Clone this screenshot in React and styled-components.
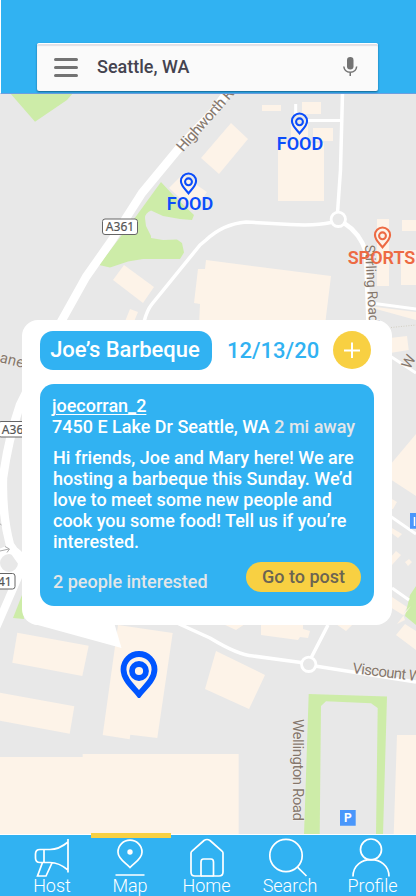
import React from "react";
import styled, { createGlobalStyle } from "styled-components";

const BLUE = "#31b2f2";
const YELLOW = "#f8d042";

const GlobalStyle = createGlobalStyle`
  *, *::before, *::after { box-sizing: border-box; }
  html, body { margin: 0; padding: 0; background: #fff; }
  body { font-family: Roboto, "Liberation Sans", sans-serif; }
`;

const Screen = styled.div`
  display: flex;
  flex-direction: column;
  width: 100%;
  height: 896px;
  overflow: hidden;
`;

const Header = styled.header`
  flex: none;
  height: 94px;
  padding: 43px 38px 0 36px;
  background: ${BLUE};
  border-left: 1px solid #fff;
  border-bottom: 1px solid #6c9fe0;
`;

const SearchBar = styled.div`
  display: flex;
  align-items: center;
  width: 341px;
  height: 48px;
  padding: 0 18px 0 17px;
  border-radius: 2px;
  background: #fafafa;
  border-top: 1px solid #fff;
  box-shadow: 0 1px 2px rgba(0, 40, 70, 0.6), inset 0 2px 1px #e2e0e6;
  svg { display: block; flex: none; margin-bottom: 1px; }
`;

const SearchText = styled.span`
  flex: 1;
  margin: 0 0 2px 19px;
  color: #44434f;
  font-size: 18px;
  font-weight: 500;
  line-height: 22px;
`;

const MapArea = styled.main`
  position: relative;
  flex: none;
  height: 740px;
  background: #e8e8e8;
  overflow: hidden;
`;

const MapCanvas = styled.svg`
  display: block;
  width: 416px;
  height: 740px;
`;

const Marker = styled.div`
  position: absolute;
  left: ${(p) => p.$x}px;
  top: ${(p) => p.$y}px;
  width: 80px;
  margin-left: -40px;
  display: flex;
  flex-direction: column;
  align-items: center;
  color: ${(p) => p.$color};
  svg { display: block; }
`;

const MarkerLabel = styled.span`
  margin: -2px 0 0 ${(p) => p.$shift || 0}px;
  font-size: 18px;
  font-weight: 600;
  line-height: 21px;
  white-space: nowrap;
`;

const Popup = styled.section`
  position: absolute;
  left: 22px;
  top: 226px;
  width: 370px;
  height: 305px;
  padding: 11px 18px 19px;
  border-radius: 16px;
  background: #fff;
`;

const PopupTail = styled.svg`
  position: absolute;
  left: 8px;
  top: 300px;
  width: 95px;
  height: 30px;
`;

const PopupHead = styled.div`
  display: flex;
  align-items: center;
  height: 39px;
`;

const EventTitle = styled.h1`
  margin: 0;
  width: 172px;
  height: 39px;
  padding-right: 2px;
  border-radius: 13px;
  background: ${BLUE};
  color: #fff;
  font-size: 22px;
  font-weight: 500;
  line-height: 38px;
  text-align: center;
  white-space: nowrap;
`;

const EventDate = styled.time`
  width: 93px;
  margin-left: 15px;
  color: ${BLUE};
  font-size: 22px;
  font-weight: 500;
  white-space: nowrap;
`;

const AddButton = styled.button`
  display: grid;
  place-items: center;
  width: 38px;
  height: 38px;
  margin: 0 0 1px 13px;
  padding: 0;
  border: 0;
  border-radius: 50%;
  background: ${YELLOW};
`;

const Post = styled.article`
  display: flex;
  flex-direction: column;
  width: 334px;
  height: 222px;
  margin-top: 14px;
  padding: 11px 13px 14px 12px;
  border-radius: 14px;
  background: ${BLUE};
  color: #fff;
  font-size: 18px;
  font-weight: 500;
  line-height: 21px;
  white-space: nowrap;
`;

const Author = styled.a`
  width: max-content;
  text-decoration: underline;
  text-decoration-thickness: 1px;
  text-underline-offset: 2px;
`;

const Muted = styled.span`
  color: #e3e6e8;
`;

const Message = styled.p`
  margin: 10px 0 0 1px;
`;

const PostFoot = styled.div`
  display: flex;
  justify-content: space-between;
  align-items: center;
  height: 30px;
  margin: auto 0 0 1px;
`;

const Interested = styled.span`
  margin-top: 9px;
  color: #e3e6e8;
`;

const PostButton = styled.button`
  width: 115px;
  height: 30px;
  padding: 0;
  border: 0;
  border-radius: 15px;
  background: ${YELLOW};
  color: #6b6452;
  font: 500 18px/30px Roboto, sans-serif;
`;

const NavBar = styled.nav`
  display: grid;
  grid-template-columns: 91px 78px 75px 92px 73px;
  flex: none;
  height: 62px;
  border-top: 1px solid #fff;
  background: ${BLUE};
`;

const NavItem = styled.a`
  position: relative;
  display: flex;
  flex-direction: column;
  align-items: center;
  margin-left: ${(p) => p.$shift || 0}px;
  padding-top: 4px;
  color: #fff;
  font-size: 18px;
  font-weight: 300;
  line-height: 18px;
  svg {
    display: block;
    overflow: visible;
    margin: 0 ${(p) => p.$iconLeft || 0}px -1px 0;
  }
`;

const ActiveBar = styled.span`
  position: absolute;
  left: 0;
  top: -2px;
  width: 80px;
  height: 5px;
  background: ${YELLOW};
`;

const Pin = ({ width, height, stroke }) => (
  <svg width={width} height={height} viewBox="0 0 37 47" fill="none" stroke="currentColor" strokeWidth={stroke}>
    <path d="M18.5 43.5C13 36.5 3 28.5 3 18.5a15.5 15.5 0 0 1 31 0C34 28.5 24 36.5 18.5 43.5Z" />
    <circle cx="18.5" cy="20" r="7" />
  </svg>
);

const RoadLabel = ({ x, y, angle, length, size = 15, children }) => (
  <text
    transform={`translate(${x} ${y}) rotate(${angle})`}
    fontSize={size}
    textLength={length}
    fill="#85776c"
    stroke="#f3f1ef"
    strokeWidth="1"
    paintOrder="stroke"
  >
    {children}
  </text>
);

const RoadBadge = ({ x, y, width, children }) => (
  <g>
    <rect x={x} y={y} width={width} height="15.5" rx="2.5" fill="#fff" stroke="#666" />
    <text x={x + width / 2} y={y + 12.2} fontSize="12" textAnchor="middle" fill="#555" stroke="#555" strokeWidth="0.2" fontFamily="Noto Sans, sans-serif">
      {children}
    </text>
  </g>
);

const StreetMap = () => (
  <MapCanvas viewBox="0 94 416 740">
    <g fill="#cdeca8">
      <path d="M10 93H73L67 100L35 121.700Z" />
      <path d="M161 182L173 195L194 215L192 220L180 219L163 216L151 210.500Q145 213 145 218L146 226L151 236V238L163 240L177 239.500L182 243L184 252.500L180 259L143 259L128 261.500L110 267.500L99 265L137 215Z" />
      <path d="M13 618L22 595L24 619Z" />
      <path d="M416 586L410 595L405 616L416 625Z" />
    </g>
    <g fill="#fdf3e8">
      <path d="M113 280L124 265L154 287L143 303Z" />
      <path d="M130 309L138 312L133 324H124Z" />
      <path d="M206 260L331 276L325 325H199L200 304L194 303L198 269H205Z" />
      <path d="M169 188L182 175L207 192L194 211Z" />
      <path d="M231 123L248 139L219 174L201 158Z" />
      <path d="M262 105H281V111H262ZM302 102H321V114H302ZM313 128H333V141H313ZM291 124H308V143H291ZM278 143H324V201H278Z" />
      <path d="M377 219H389V286H377ZM402 220H416V231H402ZM401 250H416V285H401Z" />
      <path d="M368 306L416 312V320L376 309Z" />
      <path d="M390 338L407 336L408.700 350L390 353Z" />
      <path d="M416 434L390 465V479L416 496Z" />
      <path d="M392 499L397 502L393 509H390ZM392 528L402 534L398 538L390 532ZM390 558L396 551L401 555L392 565ZM405 562L409 559L412 562L408 566ZM392 597L407 607L403 615L390 607Z" />
      <path d="M396 635L405 624L416 631V650ZM397 624L405 620L403 614L411 606Z" />
      <path d="M223 624H245L236 630ZM261 624H303V629L310 631L308 638L300 637L298 640L261 635ZM336 624H353L346 631Z" />
      <path d="M216 651L265 675L249 709L205 689Z" />
      <path d="M17.300 632.700L88.700 645.700L82.300 676L12.300 662.700Z" />
      <path d="M0 692.700L74.300 706.300L69.700 733.700L0 720.700Z" />
      <path d="M118 625L172.700 633L157.300 738L130.300 734.700L129.700 739.300L102.700 735Z" />
      <path d="M0 757H82.700V754H238.700V835H0Z" />
      <path d="M397 735H416V835H393.700Z" />
    </g>
    <path
      fill="#cdeca8"
      fillRule="evenodd"
      d="M308.700 694L387 696.500L383 835H304ZM321 706L326 701.300L371 703.300L377.700 708L376 835H319.700Z"
    />
    <g fill="none" stroke="#fff" strokeLinejoin="round">
      <path strokeWidth="8.500" d="M232 86L213 112L180 147L142 193L112 240L86 277L62 320L20 405Q8 440 3 478Q2 515 10 545L22 562" />
      <circle strokeWidth="8" cx="9" cy="563" r="13" />
      <path strokeWidth="8" d="M22 568L-4 628" />
      <path strokeWidth="3.500" d="M342.500 93L340.500 170L337.500 213M331 222.500Q316 226 290 224.500L246 222Q223 224 206 240L200 245L152 304Q147 310 144 322" />
      <path strokeWidth="3" d="M340 120.500H306M295.700 104V114M371 303L416 309M390 356L416 373M390 516L416 534M392 588L409 600" />
      <path strokeWidth="4.500" d="M344 223Q360 233 366 252L368.500 325" />
      <path strokeWidth="3.500" d="M177 623L210 638Q238 655 253 656L301 662.500M328 625L311 658M315 666L416 682" />
    </g>
    <g fill="#e8e8e8" stroke="#fff" strokeWidth="2.800">
      <circle cx="338.300" cy="219.300" r="7.200" />
      <circle cx="308.700" cy="664.300" r="7.200" />
    </g>
    <path d="M391 327.500L416 325" stroke="#d3cfc2" strokeDasharray="1 1.500" />
    <path d="M0 551L9 549M5 546.500L9.500 549L7 552.500M-1 523L1.500 525" fill="none" stroke="#aaa" />
    <RoadLabel x={183} y={152.500} angle={-48.500} length={86}>Highworth Ro</RoadLabel>
    <RoadLabel x={365} y={245} angle={87} length={78} size={14}>Stirling Road</RoadLabel>
    <RoadLabel x={-9} y={360} angle={14} length={33}>Lane</RoadLabel>
    <RoadLabel x={292.500} y={719} angle={90} length={102} size={15}>Wellington Road</RoadLabel>
    <RoadLabel x={352} y={673} angle={7} length={77}>Viscount Wa</RoadLabel>
    <RoadLabel x={410} y={370} angle={-62} length={12}>W</RoadLabel>
    <RoadBadge x={102.500} y={219} width={35}>A361</RoadBadge>
    <RoadBadge x={-1.5} y={421.500} width={35}>A361</RoadBadge>
    <RoadBadge x={-20} y={573.500} width={35}>A341</RoadBadge>
    <g>
      <path fill="#4a97fb" d="M340 810H355.700V825.700H340ZM410 513H426V528.700H410Z" />
      <path fill="none" stroke="#fff" strokeWidth="1.500" d="M414.500 517V526" />
      <text x="347.900" y="822.300" fontSize="12" fontWeight="700" fill="#fff" textAnchor="middle">P</text>
    </g>
  </MapCanvas>
);

const HostIcon = () => (
  <svg width="36" height="39" viewBox="0 0 36 39" fill="none" stroke="#fff" strokeWidth="1.700">
    <path d="M34 0V33.500M34 3Q25 10.500 16 10.500H6Q1.500 10.500 1.500 15V19Q1.500 23.500 6 23.500H16Q25 23.500 34 31M10 10.500V23.500M8.500 23.500L3.500 37H12L18 24" />
  </svg>
);
const MapIcon = () => (
  <svg width="30" height="39" viewBox="0 0 30 39" fill="none" stroke="#fff" strokeWidth="1.700">
    <path d="M15 28.500C11 24 3 20 3 13.200a12 12 0 0 1 24 0C27 20 19 24 15 28.500ZM.5 36H29.500" />
    <circle cx="15" cy="13" r="2.700" fill="#fff" stroke="none" />
  </svg>
);
const HomeIcon = () => (
  <svg width="34" height="39" viewBox="0 0 34 39" fill="none" stroke="#fff" strokeWidth="1.700" strokeLinejoin="round">
    <path d="M1 14Q1 13 2 12.200L14 1.500Q17 -.5 20 1.500L32 12.200Q33 13 33 14V33Q33 37 29 37H23.500V23Q23.500 20 21 20H13.500Q11 20 11 23V37H5Q1 37 1 33Z" />
    <path d="M11 37H23.500" />
  </svg>
);
const SearchIcon = () => (
  <svg width="38" height="39" viewBox="0 0 38 39" fill="none" stroke="#fff" strokeWidth="1.700">
    <circle cx="17" cy="16.500" r="16.200" />
    <path d="M28.500 28.200L37.500 37" />
  </svg>
);
const ProfileIcon = () => (
  <svg width="38" height="39" viewBox="0 0 38 39" fill="none" stroke="#fff" strokeWidth="1.700">
    <circle cx="19" cy="10.500" r="10.500" />
    <path d="M1 37.500C1 15 37 15 37 37.500" />
  </svg>
);

export default function App() {
  return (
    <>
      <GlobalStyle />
      <Screen>
        <Header>
          <SearchBar>
            <svg width="24" height="20" viewBox="0 0 24 20" stroke="#737373" strokeWidth="3" strokeLinecap="round">
              <path d="M1.500 2.500H22.500M1.500 10.500H22.500M1.500 18.500H22.500" />
            </svg>
            <SearchText>Seattle, WA</SearchText>
            <svg width="20" height="20" viewBox="0 0 20 20">
              <rect x="7" y="0" width="6.500" height="12.500" rx="3.200" fill="#737373" />
              <path d="M3.800 9.500Q4.500 15.300 10.250 15.300Q16 15.300 16.700 9.500M10.250 15V19" fill="none" stroke="#737373" strokeWidth="1.500" />
            </svg>
          </SearchBar>
        </Header>
        <MapArea>
          <StreetMap />
          <Marker $x={299.5} $y={17.5} $color="#0b4dfb">
            <Pin width={19} height={23} stroke={4.2} />
            <MarkerLabel $shift={1}>FOOD</MarkerLabel>
          </Marker>
          <Marker $x={188.5} $y={77.5} $color="#0b4dfb">
            <Pin width={19} height={23} stroke={4.2} />
            <MarkerLabel $shift={3}>FOOD</MarkerLabel>
          </Marker>
          <Marker $x={382.5} $y={131.5} $color="#ed6a43">
            <Pin width={19} height={23} stroke={4.2} />
            <MarkerLabel $shift={-2}>SPORTS</MarkerLabel>
          </Marker>
          <Popup>
            <PopupTail viewBox="30 620 95 30">
              <path d="M34 624L121.500 648L114.500 624Z" fill="#fff" />
            </PopupTail>
            <PopupHead>
              <EventTitle>Joe’s Barbeque</EventTitle>
              <EventDate>12/13/20</EventDate>
              <AddButton aria-label="Add">
                <svg width="16" height="16" viewBox="0 0 16 16" stroke="#fff" strokeWidth="2">
                  <path d="M0 8.500H16M8 .5V16" />
                </svg>
              </AddButton>
            </PopupHead>
            <Post>
              <Author>joecorran_2</Author>
              <div>
                7450 E Lake Dr Seattle, WA <Muted>2 mi away</Muted>
              </div>
              <Message>
                Hi friends, Joe and Mary here! We are<br />
                hosting a barbeque this Sunday. We’d<br />
                love to meet some new people and<br />
                cook you some food! Tell us if you’re<br />
                interested.
              </Message>
              <PostFoot>
                <Interested>2 people interested</Interested>
                <PostButton>Go to post</PostButton>
              </PostFoot>
            </Post>
          </Popup>
          <Marker $x={138.5} $y={557} $color="#0055ff">
            <Pin width={38} height={47} stroke={5.8} />
          </Marker>
        </MapArea>
        <NavBar>
          <NavItem $shift={13}><HostIcon />Host</NavItem>
          <NavItem><ActiveBar /><MapIcon />Map</NavItem>
          <NavItem><HomeIcon />Home</NavItem>
          <NavItem $iconLeft={4}><SearchIcon />Search</NavItem>
          <NavItem $iconLeft={3}><ProfileIcon />Profile</NavItem>
        </NavBar>
      </Screen>
    </>
  );
}
